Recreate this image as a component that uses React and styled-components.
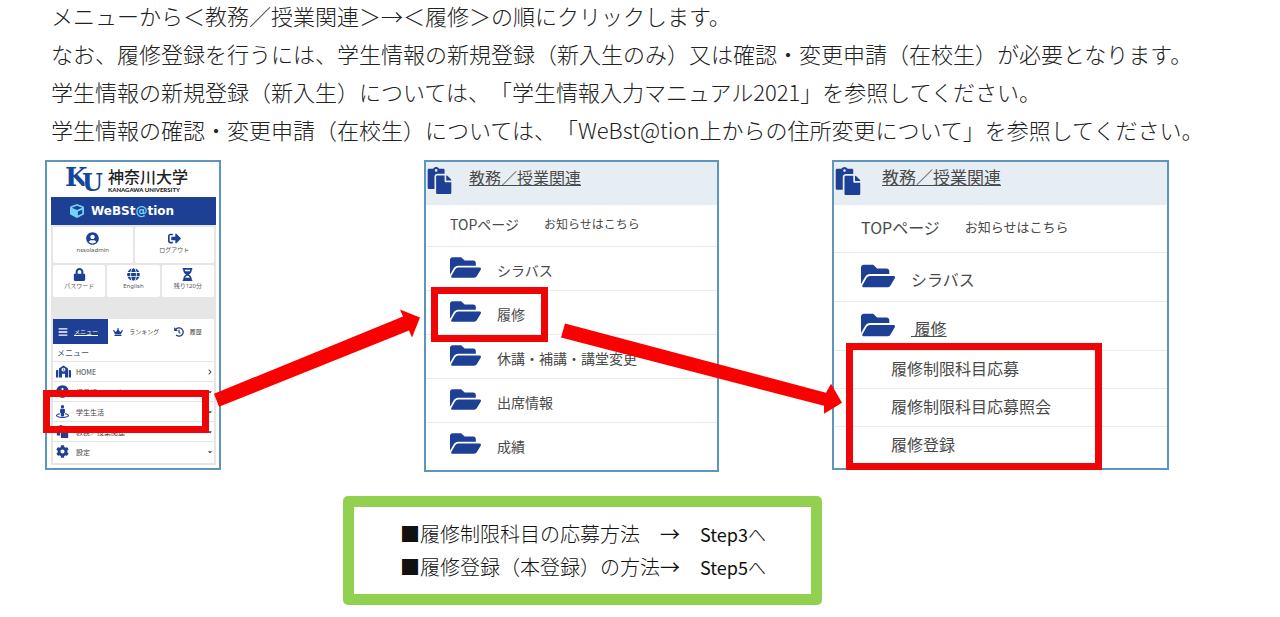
/* eslint-disable react/prop-types */
import React from 'react';
import styled, { createGlobalStyle } from 'styled-components';
import {
  FaUserCircle, FaSignOutAlt, FaLock, FaGlobe, FaHourglassHalf, FaBars, FaCrown,
  FaHistory, FaSchool, FaInfoCircle, FaStreetView, FaPaste, FaCog, FaFolderOpen,
  FaCube, FaChevronRight, FaCaretDown,
} from 'react-icons/fa';

const navy = '#1d3f94';
const red = '#ee0505';

const GlobalStyle = createGlobalStyle`
  * { box-sizing: border-box; }
  body {
    margin: 0;
    background: #fff;
    color: #222;
    font-family: 'Noto Sans CJK JP', sans-serif;
    text-spacing-trim: space-all;
  }
  a { color: inherit; text-decoration: none; }
  p { margin: 0; }
`;

const Page = styled.main`
  display: flow-root;
  padding: 0 45px;
`;

const Intro = styled.section`
  margin-top: -4px;
  padding-left: 6px;
  font-size: 22px;
  font-weight: 300;
  line-height: 38px;
  white-space: nowrap;
`;

const Steps = styled.section`
  position: relative;
  display: grid;
  grid-template-columns: 176fr 203fr 295fr 113fr 337fr 66fr;
  align-items: start;
  margin-top: 12px;
`;

const Panel = styled.div`
  grid-column: ${(p) => p.$col};
  border: 2px solid #5c96bd;
  background: #fff;
`;

const Highlight = styled.div`
  position: absolute;
  inset: ${(p) => p.$inset};
  border: 7px solid ${red};
  pointer-events: none;
  z-index: 1;
`;

const Arrows = styled.svg`
  position: absolute;
  inset: 0;
  width: 100%;
  height: 100%;
  overflow: visible;
  pointer-events: none;
  z-index: 2;
`;

/* portal side menu */
const Portal = styled(Panel)`
  padding: 0 3px 3px 4px;
`;

const Logo = styled.header`
  display: flex;
  align-items: center;
  gap: 6px;
  height: 35px;
  padding-left: 14px;
`;

const Mark = styled.svg`
  width: 37px;
  height: 30px;
  overflow: visible;
  fill: #14469b;
  font-family: 'DejaVu Serif', serif;
  font-weight: 700;
`;

const School = styled.div`
  color: #222;
  font-size: 16px;
  line-height: 20px;
  font-weight: 500;
  white-space: nowrap;
  small {
    display: block;
    font-family: Lato, sans-serif;
    font-size: 6px;
    line-height: 8px;
    font-weight: 900;
  }
`;

const Brand = styled.div`
  display: flex;
  align-items: center;
  gap: 7px;
  height: 28px;
  padding-left: 19px;
  background: ${navy};
  color: #fff;
  font: 700 12px 'DejaVu Sans', sans-serif;
  svg, span { color: #72d4f5; }
  svg { font-size: 14px; }
`;

const PortalBody = styled.div`
  padding: 2px;
  background: #e6e6e6;
`;

const Tiles = styled.div`
  display: grid;
  grid-template-columns: repeat(${(p) => p.$count}, 1fr);
  gap: 2px;
  margin-bottom: 2px;
`;

const Tile = styled.button`
  display: flex;
  flex-direction: column;
  align-items: center;
  justify-content: center;
  height: ${(p) => (p.$tall ? 36 : 32)}px;
  padding: 0 0 3px;
  border: 0;
  border-radius: 2px;
  background: #fff;
  color: #555;
  font-family: 'Noto Sans', 'Noto Sans CJK JP', sans-serif;
  font-size: 6px;
  line-height: 10px;
  white-space: nowrap;
  svg { color: ${navy}; font-size: 13px; }
`;

const Tabs = styled.div`
  display: grid;
  grid-template-columns: 55fr 60fr 45fr;
  margin-top: 22px;
  background: #fff;
`;

const Tab = styled.button`
  display: flex;
  align-items: center;
  gap: 6px;
  height: 25px;
  padding: 0 5px;
  border: 0;
  background: ${(p) => (p.$active ? navy : '#fff')};
  color: ${(p) => (p.$active ? '#fff' : '#444')};
  text-decoration: ${(p) => (p.$active ? 'underline' : 'none')};
  font-family: inherit;
  font-size: 6px;
  white-space: nowrap;
  svg {
    flex: none;
    color: ${(p) => (p.$active ? '#fff' : navy)};
    font-size: 10px;
  }
`;

const MenuTitle = styled.h2`
  margin: 0;
  padding-left: 4px;
  background: #fff;
  color: #3d5583;
  font-size: 8px;
  line-height: 17px;
  font-weight: 400;
`;

const MenuList = styled.nav`
  padding-bottom: 2px;
  background: #fff;
`;

const MenuItem = styled.a`
  position: relative;
  display: grid;
  grid-template-columns: 18px 1fr 6px;
  align-items: center;
  gap: 2px;
  height: 20px;
  padding: 0 1px 0 3px;
  border-top: 1px solid #e4e4e4;
  color: #444;
  font-size: 7px;
  svg { font-size: 6px; }
  svg:first-child { color: ${navy}; font-size: 13px; }
  svg.wide { font-size: 15px; }
`;

/* folder list, $big is the opened version */
const FolderPanel = styled(Panel)`
  --row: ${(p) => (p.$big ? 49 : 44)}px;
  --text: ${(p) => (p.$big ? 16 : 14)}px;
  --icon: ${(p) => (p.$big ? 34 : 31)}px;
  --indent: ${(p) => (p.$big ? 27 : 24)}px;
  padding-bottom: 4px;
  color: #4a4a4a;
`;

const FolderHead = styled.header`
  display: flex;
  align-items: flex-start;
  gap: ${(p) => (p.$big ? 20 : 16)}px;
  height: 43px;
  padding-top: 5px;
  background: #e7eef3;
  svg { color: ${navy}; font-size: ${(p) => (p.$big ? 28 : 27)}px; }
  a {
    font-size: ${(p) => (p.$big ? 17 : 16)}px;
    line-height: 20px;
    text-decoration: underline;
  }
`;

const TopRow = styled.div`
  display: flex;
  align-items: center;
  gap: 25px;
  height: ${(p) => (p.$big ? 47 : 41)}px;
  padding: 0 0 4px var(--indent);
  font-size: var(--text);
  a + a { font-size: ${(p) => (p.$big ? 13 : 12)}px; }
`;

const FolderRow = styled.div`
  position: relative;
  display: flex;
  align-items: center;
  gap: 16px;
  height: var(--row);
  padding: 0 0 3px var(--indent);
  border-top: 1px solid #e6ebee;
  font-size: var(--text);
  svg { color: ${navy}; font-size: var(--icon); }
  a {
    padding-top: 6px;
    text-decoration: ${(p) => (p.$open ? 'underline' : 'none')};
    white-space: pre;
  }
`;

const SubList = styled.div`
  position: relative;
`;

const SubItem = styled.a`
  display: block;
  height: 38px;
  padding-left: 57px;
  border-top: 1px solid #ececec;
  font-size: 16px;
  line-height: 34px;
`;

const Links = styled.section`
  display: grid;
  gap: 3px;
  width: 40%;
  min-width: 479px;
  margin: 24px 0 0 298px;
  padding: 12px 0 12px 46px;
  border: 11px solid #92d050;
  border-radius: 5px;
  color: #111;
`;

const LinkRow = styled.p`
  display: grid;
  grid-template-columns: 300px 1fr;
  font-size: 20px;
  line-height: 30px;
  font-weight: 300;
  white-space: pre;
  a { font-size: 18px; }
  b { font-weight: 400; }
`;

const folders = ['シラバス', '履修', '休講・補講・講堂変更', '出席情報', '成績'];
const subItems = ['履修制限科目応募', '履修制限科目応募照会', '履修登録'];
const menu = [
  { label: 'HOME', icon: <FaSchool className="wide" />, home: true },
  { label: '掲示板・アンケート', icon: <FaInfoCircle /> },
  { label: '学生生活', icon: <FaStreetView />, marked: true },
  { label: '教務／授業関連', icon: <FaPaste /> },
  { label: '設定', icon: <FaCog /> },
];

function PortalMenu() {
  return (
    <Portal $col={1}>
      <Logo>
        <Mark viewBox="0 0 37 30" role="img" aria-label="KU">
          <text x="0" y="21" fontSize="26" stroke="#fff" strokeWidth="1" paintOrder="stroke">
            K
            <tspan x="17" dy="5" fontSize="24">U</tspan>
          </text>
        </Mark>
        <School>
          神奈川大学
          <small>KANAGAWA UNIVERSITY</small>
        </School>
      </Logo>
      <Brand>
        <FaCube />
        <div>
          WeBSt
          <span>@</span>
          tion
        </div>
      </Brand>
      <PortalBody>
        <Tiles $count={2}>
          <Tile $tall><FaUserCircle />nssoladmin</Tile>
          <Tile $tall><FaSignOutAlt />ログアウト</Tile>
        </Tiles>
        <Tiles $count={3}>
          <Tile><FaLock />パスワード</Tile>
          <Tile><FaGlobe />English</Tile>
          <Tile><FaHourglassHalf />残り120分</Tile>
        </Tiles>
        <Tabs>
          <Tab $active><FaBars />メニュー</Tab>
          <Tab><FaCrown />ランキング</Tab>
          <Tab><FaHistory />履歴</Tab>
        </Tabs>
        <MenuTitle>メニュー</MenuTitle>
        <MenuList>
          {menu.map((item) => (
            <MenuItem href="#" key={item.label}>
              {item.icon}
              {item.label}
              {item.home ? <FaChevronRight /> : <FaCaretDown />}
              {item.marked ? <Highlight $inset="-12px 5px -12px -10px" /> : null}
            </MenuItem>
          ))}
        </MenuList>
      </PortalBody>
    </Portal>
  );
}

function FolderTop({ big }) {
  return (
    <>
      <FolderHead $big={big}>
        <FaPaste />
        <a href="#">教務／授業関連</a>
      </FolderHead>
      <TopRow $big={big}>
        <a href="#">TOPページ</a>
        <a href="#">お知らせはこちら</a>
      </TopRow>
    </>
  );
}

function App() {
  return (
    <Page>
      <GlobalStyle />
      <Intro>
        <p>メニューから＜教務／授業関連＞→＜履修＞の順にクリックします。</p>
        <p>なお、履修登録を行うには、学生情報の新規登録（新入生のみ）又は確認・変更申請（在校生）が必要となります。</p>
        <p>学生情報の新規登録（新入生）については、「学生情報入力マニュアル2021」を参照してください。</p>
        <p>学生情報の確認・変更申請（在校生）については、「WeBst@tion上からの住所変更について」を参照してください。</p>
      </Intro>
      <Steps>
        <PortalMenu />
        <FolderPanel $col={3}>
          <FolderTop />
          {folders.map((name) => (
            <FolderRow key={name}>
              <FaFolderOpen />
              <a href="#">{name}</a>
              {name === '履修' ? <Highlight $inset="-4px 169px -8px 5px" /> : null}
            </FolderRow>
          ))}
        </FolderPanel>
        <FolderPanel $col={5} $big>
          <FolderTop big />
          <FolderRow>
            <FaFolderOpen />
            <a href="#">シラバス</a>
          </FolderRow>
          <FolderRow $open>
            <FaFolderOpen />
            <a href="#"> 履修</a>
          </FolderRow>
          <SubList>
            {subItems.map((name) => <SubItem href="#" key={name}>{name}</SubItem>)}
            <Highlight $inset="-7px 65px -6px 12px" />
          </SubList>
        </FolderPanel>
        <Arrows viewBox="0 0 1190 311" preserveAspectRatio="none" fill="#fb0000">
          <path d="M169 233 L358 156 L355 149 L375 157 L367 177 L364 170 L174 246 Z" />
          <path d="M520 163 L781 232 L786 223 L797 242 L779 253 L779 245 L516 177 Z" />
        </Arrows>
      </Steps>
      <Links>
        <LinkRow>
          <span>■履修制限科目の応募方法　<b>→</b></span>
          <a href="#"><b>Step3</b>へ</a>
        </LinkRow>
        <LinkRow>
          <span>■履修登録（本登録）の方法<b>→</b></span>
          <a href="#"><b>Step5</b>へ</a>
        </LinkRow>
      </Links>
    </Page>
  );
}

export default App;
